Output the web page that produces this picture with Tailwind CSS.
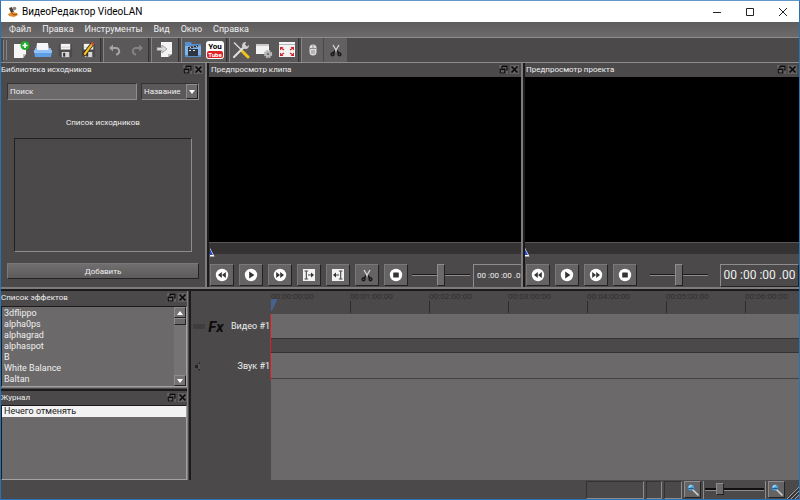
<!doctype html>
<html lang="ru">
  <head>
    <meta charset="UTF-8" />
    <meta name="viewport" content="width=device-width, initial-scale=1" />
    <title>ВидеоРедактор VideoLAN</title>
    <script src="https://cdn.jsdelivr.net/npm/@tailwindcss/browser@4"></script>
  </head>
  <body class="h-screen overflow-hidden flex flex-col bg-[#4b494a] border border-[#2a72b8] border-t-[#6297c8] font-[Roboto,'Noto_Sans',sans-serif] text-[9px] leading-[11px] text-[#efefef]">

    <!-- shared icons -->
    <svg class="hidden">
      <symbol id="float" viewBox="0 0 9 9">
        <path d="M3 1h5v4H7M3 1v2M3 1.5h5" fill="none" stroke="#0c0c0c" stroke-width="1.2" />
        <path d="M1.2 4h4.6v4H1.2zM1 4.5h5" fill="none" stroke="#0c0c0c" stroke-width="1.2" />
      </symbol>
      <symbol id="close" viewBox="0 0 9 9">
        <path d="M1.5 1.5l6 6M7.5 1.5l-6 6" stroke="#0c0c0c" stroke-width="1.7" />
      </symbol>
      <symbol id="rewind" viewBox="0 0 14 14">
        <circle cx="7" cy="7" r="6.2" fill="#fff" />
        <path d="M6.8 4v6L3 7zM10.8 4v6L7 7z" fill="#333" />
      </symbol>
      <symbol id="play" viewBox="0 0 14 14">
        <circle cx="7" cy="7" r="6.2" fill="#fff" />
        <path d="M5.2 3.6v6.8L10.4 7z" fill="#333" />
      </symbol>
      <symbol id="forward" viewBox="0 0 14 14">
        <circle cx="7" cy="7" r="6.2" fill="#fff" />
        <path d="M3.2 4v6L7 7zM7.2 4v6L11 7z" fill="#333" />
      </symbol>
      <symbol id="stop" viewBox="0 0 14 14">
        <circle cx="7" cy="7" r="6.2" fill="#fff" />
        <rect x="4.2" y="4.5" width="5.6" height="5" rx=".6" fill="#333" />
      </symbol>
      <symbol id="mark" viewBox="0 0 14 14">
        <rect x="1" y="1" width="12" height="12" fill="#f2f2f2" />
        <path d="M2.5 3h3.6M2.5 11h3.6M4.3 3v8M6 7h4.500" fill="none" stroke="#444" stroke-width="1.1" />
        <path d="M9 4.600v4.800L12 7z" fill="#333" />
      </symbol>
      <symbol id="scissors" viewBox="0 0 14 14">
        <path d="M4 2l4.200 7M10 2L5.800 9" stroke="#d8d8d8" stroke-width="1.300" />
        <path d="M6 7.500L4 10.500M8 7.500l2 3" stroke="#161616" stroke-width="1.500" />
        <circle cx="3.500" cy="11.300" r="1.500" fill="#4a4a4a" stroke="#161616" stroke-width="1.300" />
        <circle cx="10.500" cy="11.300" r="1.500" fill="#4a4a4a" stroke="#161616" stroke-width="1.300" />
      </symbol>
      <symbol id="zoom" viewBox="0 0 14 14">
        <path d="M6.500 6.500L12 12" stroke="#d4d4d4" stroke-width="1.600" stroke-linecap="round" />
        <circle cx="5" cy="4.500" r="3" fill="#4fa3dc" />
        <path d="M3.200 4.500a2 2 0 0 1 2.500-1.800" fill="none" stroke="#dcefff" stroke-width="1" />
        <path d="M2.500 5.500h5" stroke="#1c5d94" />
      </symbol>
      <symbol id="floppy" viewBox="0 0 18 18">
        <path d="M2 2h13l1 1v13H3l-1-1z" fill="#494949" />
        <rect x="4" y="2" width="10" height="6" fill="#f4f4f4" />
        <path d="M4 5.500h10" stroke="#ccc" />
        <rect x="5" y="10.500" width="8" height="5.500" fill="#d6d6d6" />
        <rect x="6.500" y="11.500" width="2.200" height="4" fill="#333" />
      </symbol>
    </svg>

    <!-- title bar -->
    <header class="h-[21px] shrink-0 bg-white text-black flex items-center pl-[6px]">
      <svg class="size-3 mr-[3px]" viewBox="0 0 12 12">
        <path d="M2 2l3-1 2 5-3 1z" fill="#4b4038" />
        <circle cx="7.500" cy="2.500" r="1.800" fill="#8b8580" />
        <path d="M1 8l4-2 5 1 1 2-4 2-5-1z" fill="#e08a2c" />
        <path d="M4 6l3 3 3-1" fill="none" stroke="#a04d12" />
      </svg>
      <h1 class="text-[10px] leading-[14px] grow">ВидеоРедактор VideoLAN</h1>
      <button aria-label="Свернуть" class="w-[33px] h-full grid place-items-center"><svg class="size-2" viewBox="0 0 8 8"><path d="M0 4.500h8" stroke="#222" /></svg></button>
      <button aria-label="Развернуть" class="w-[33px] h-full grid place-items-center"><svg class="size-2" viewBox="0 0 8 8"><path d="M.5.500h7v7h-7z" fill="none" stroke="#222" /></svg></button>
      <button aria-label="Закрыть" class="w-[33px] h-full grid place-items-center"><svg class="size-2" viewBox="0 0 8 8"><path d="M0 0l8 8M8 0L0 8" stroke="#222" /></svg></button>
    </header>

    <!-- menu -->
    <nav class="h-4 shrink-0 flex items-center gap-[11px] pl-2 bg-linear-to-b from-[#5e5c5d] to-[#6c6a6b] border-b border-[#8e8c8d]">
      <a href="#">Файл</a>
      <a href="#">Правка</a>
      <a href="#">Инструменты</a>
      <a href="#">Вид</a>
      <a href="#">Окно</a>
      <a href="#">Справка</a>
    </nav>

    <!-- toolbar -->
    <div class="h-[25px] shrink-0 flex items-stretch gap-[2px] pl-[2px] border-b border-[#8e8c8d]">
      <div class="flex bg-[#5a5859] border-r border-[#343233]">
        <span class="w-1 my-[2px] mr-[3px] border-x border-[#858384]"></span>
        <button aria-label="Новый" class="w-[22px] grid place-items-center">
          <svg class="size-[18px]" viewBox="0 0 18 18">
            <path d="M2 3h12v10l-3 4H2z" fill="#f6f6f6" /><path d="M14 13l-3 4v-4z" fill="#bbb" />
            <circle cx="13" cy="4.500" r="4.500" fill="#1fae2c" /><path d="M13 2v5M10.500 4.500h5" stroke="#fff" stroke-width="1.600" />
          </svg>
        </button>
        <button aria-label="Открыть" class="w-[22px] grid place-items-center">
          <svg class="size-[18px]" viewBox="0 0 18 18">
            <path d="M3 2h11l1 8H2z" fill="#f4f6f9" /><path d="M1 7h2v3h12V7h2v3H1z" fill="#88b4e6" />
            <path d="M0 9h18l-1 7H1z" fill="#5f9fe8" /><path d="M0 9h18v3H0z" fill="#8fc0f6" />
          </svg>
        </button>
        <button aria-label="Сохранить" class="w-[22px] grid place-items-center"><svg class="size-[17px]"><use href="#floppy" /></svg></button>
        <button aria-label="Сохранить как" class="w-6 grid place-items-center">
          <svg class="size-[17px]" viewBox="0 0 18 18">
            <use href="#floppy" />
            <path d="M4 14L13 2" stroke="#2b1c00" stroke-width="4" /><path d="M4.500 13.500L13 2" stroke="#f1bd2d" stroke-width="2.400" /><path d="M12.500 2.700L14 .8" stroke="#d94a3a" stroke-width="3" />
          </svg>
        </button>
      </div>
      <div class="flex bg-[#5a5859] border-l border-r border-l-[#858384] border-r-[#343233]">
        <button aria-label="Отменить" class="w-[22px] grid place-items-center">
          <svg class="size-3" viewBox="0 0 12 12"><path d="M3 4h4a3 3 0 0 1 0 6.500" fill="none" stroke="#a5a3a4" stroke-width="2" /><path d="M0 4l4-3.500v7z" fill="#a5a3a4" /></svg>
        </button>
        <button aria-label="Повторить" class="w-[22px] grid place-items-center">
          <svg class="size-3" viewBox="0 0 12 12"><path d="M9 4H5a3 3 0 0 0 0 6.500" fill="none" stroke="#848283" stroke-width="2" /><path d="M12 4L8 .5v7z" fill="#848283" /></svg>
        </button>
      </div>
      <div class="flex bg-[#5a5859] border-l border-r border-l-[#858384] border-r-[#343233] px-[2px]">
        <button aria-label="Экспорт" class="w-[22px] grid place-items-center">
          <svg class="size-[18px]" viewBox="0 0 18 18">
            <path d="M5 1h11v12l-4 3H5z" fill="#f4f4f4" /><path d="M16 13l-4 3v-3z" fill="#bbb" />
            <path d="M1 6.500h5V4l5 4-5 4V9.500H1z" fill="#d9d9d9" stroke="#8c8c8c" stroke-width=".7" />
          </svg>
        </button>
      </div>
      <div class="flex bg-[#5a5859] border-l border-r border-l-[#858384] border-r-[#343233]">
        <button aria-label="Создать видео" class="w-[22px] grid place-items-center">
          <svg class="size-[18px]" viewBox="0 0 18 18">
            <path d="M1 1h6l1 2h9v13H1z" fill="#5590cf" /><path d="M1 5h16v9H1z" fill="#7fb5ea" />
            <path d="M4 8h10v7H4z" fill="#2f3640" /><path d="M4 6l10-2v2L4 8z" fill="#2a2f36" />
            <path d="M6 5.800l1 1.500M9 5.200l1 1.500M12 4.600l1 1.300M5 9.500h2M9 9.500h2" stroke="#dfe8f0" />
          </svg>
        </button>
        <button aria-label="YouTube" class="w-[22px] grid place-items-center">
          <span class="size-[18px] rounded-[3px] bg-white flex flex-col items-center justify-center font-bold">
            <span class="text-[8px] leading-[9px] text-black">You</span>
            <span class="text-[6px] leading-[7px] w-4 rounded-[2px] bg-[#e02426] text-white">Tube</span>
          </span>
        </button>
      </div>
      <div class="flex bg-[#5a5859] border-l border-r border-l-[#858384] border-r-[#343233]">
        <button aria-label="Настройки" class="w-[22px] grid place-items-center">
          <svg class="size-[18px]" viewBox="0 0 18 18">
            <path d="M2 1.500l8 8" stroke="#d8d8d8" stroke-width="1.400" /><path d="M10 10l6 6" stroke="#f0c21b" stroke-width="3" stroke-linecap="round" />
            <path d="M2 16L13 5" stroke="#dedede" stroke-width="2.200" stroke-linecap="round" /><path d="M14 1a3.500 3.500 0 1 0 3 3l-2 1.500-2-1.500z" fill="#cfcfcf" />
          </svg>
        </button>
        <button aria-label="Параметры проекта" class="w-6 grid place-items-center">
          <svg class="size-[18px]" viewBox="0 0 18 18">
            <rect x="1" y="3" width="13" height="10" fill="#f2f2f2" /><path d="M1 4h13" stroke="#cacaca" stroke-width="2" />
            <circle cx="13" cy="13" r="3" fill="#999" stroke="#bdbdbd" stroke-width="2.400" stroke-dasharray="1.600 .8" /><circle cx="13" cy="13" r="2.800" fill="#b5b5b5" /><circle cx="13" cy="13" r="1.100" fill="#666" />
          </svg>
        </button>
        <button aria-label="Во весь экран" class="w-[22px] grid place-items-center">
          <svg class="size-[18px]" viewBox="0 0 18 18">
            <rect x="1" y="1" width="16" height="15" fill="#f4f4f4" /><path d="M1 3.500h16" stroke="#b5b5b5" />
            <path d="M2 6h3.500L2 9.500zM16 6h-3.500L16 9.500zM2 15h3.500L2 11.500zM16 15h-3.500L16 11.500z" fill="#d0252b" />
            <path d="M3 7l3 2M15 7l-3 2M3 14l3-2M15 14l-3-2" stroke="#d0252b" stroke-width="1.300" />
          </svg>
        </button>
      </div>
      <div class="flex bg-[#626061] border-l border-[#858384]">
        <button aria-label="Выделение" class="w-[22px] grid place-items-center border-r border-[#4b494a]">
          <svg class="size-[14px]" viewBox="0 0 14 14">
            <rect x="3.500" y="1.500" width="7" height="11" rx="3.500" fill="#dedede" /><path d="M4 5.500h6M7 1.500v4M5 8h4M5 10h4" stroke="#8a8a8a" />
          </svg>
        </button>
        <button aria-label="Разрезать" class="w-[23px] grid place-items-center"><svg class="size-[14px]"><use href="#scissors" /></svg></button>
      </div>
    </div>

    <main class="grow min-h-0 grid grid-rows-[224fr_4px_189fr]">

      <div class="min-h-0 grid grid-cols-[204px_4px_312fr_4px_274fr]">
        <!-- library -->
        <section class="flex flex-col min-h-0">
          <div class="h-[14px] shrink-0 flex items-center gap-[2px] pr-[2px] pb-[2px]">
            <h2 class="grow text-[8px]">Библиотека исходников</h2>
            <button aria-label="Открепить" class="size-[9px] bg-[#626061]"><svg class="size-[9px]"><use href="#float" /></svg></button>
            <button aria-label="Закрыть" class="size-[9px] bg-[#626061]"><svg class="size-[9px]"><use href="#close" /></svg></button>
          </div>
          <div class="grow min-h-0 flex flex-col px-[6px] pt-[6px] pb-[8px]">
            <div class="flex gap-1 shrink-0">
              <input type="text" aria-label="Поиск" placeholder="Поиск" class="w-0 grow h-[17px] px-[2px] text-[8px] bg-[#6b696a] border border-t-[#343233] border-l-[#343233] border-b-[#8e8c8d] border-r-[#8e8c8d] placeholder:text-[#efefef] outline-none" />
              <div class="relative w-[58px]">
                <select aria-label="Сортировка" class="appearance-none w-full h-[17px] pl-[2px] text-[8px] bg-[#5a5859] border border-t-[#343233] border-l-[#343233] border-b-[#8e8c8d] border-r-[#8e8c8d] outline-none">
                  <option>Название</option>
                </select>
                <span class="absolute right-[1px] top-[1px] bottom-[1px] w-3 grid place-items-center pointer-events-none bg-[#6b696a] border border-[#8e8c8d] border-r-[#222] border-b-[#222]">
                  <svg class="w-[6px] h-1" viewBox="0 0 6 4"><path d="M0 0h6L3 4z" fill="#fff" /></svg>
                </span>
              </div>
            </div>
            <h3 class="text-center text-[8px] mt-[17px] mb-[10px]">Список исходников</h3>
            <div class="grow mx-[7px] border border-t-[#222021] border-l-[#222021] border-b-[#8e8c8d] border-r-[#8e8c8d]"></div>
            <button class="h-4 shrink-0 mt-[11px] text-[8px] bg-linear-to-b from-[#706e6f] to-[#5c5a5b] border border-[#7a7879] border-r-[#222] border-b-[#222]">Добавить</button>
          </div>
        </section>

        <div class="border-l-2 border-r-2 border-l-[#7d7b7c] border-r-[#1c1a1b]"></div>

        <!-- clip preview -->
        <section class="flex flex-col min-w-0 min-h-0">
          <div class="h-[14px] shrink-0 flex items-center gap-[2px] pl-[2px] pr-[2px] pb-[2px]">
            <h2 class="grow text-[8px]">Предпросмотр клипа</h2>
            <button aria-label="Открепить" class="size-[9px] bg-[#626061]"><svg class="size-[9px]"><use href="#float" /></svg></button>
            <button aria-label="Закрыть" class="size-[9px] bg-[#626061]"><svg class="size-[9px]"><use href="#close" /></svg></button>
          </div>
          <div class="grow bg-black"></div>
          <div class="relative h-3 shrink-0 bg-[#343233] border-t border-[#5a5859]">
            <svg class="absolute left-[1px] top-[5px] w-[5px] h-[9px]" viewBox="0 0 5 9"><path d="M0 0l4.500 8.500H0z" fill="#fff" /><path d="M0 1l3 6H0z" fill="#2348d8" /></svg>
          </div>
          <div class="shrink-0 h-[33px] flex items-center pl-[1px] pt-[9px] overflow-hidden">
            <div class="flex gap-[5px] shrink-0">
              <button aria-label="Назад" class="w-6 h-[22px] grid place-items-center bg-[#656364] border border-[#7a7879] border-r-[#222] border-b-[#222]"><svg class="size-[14px]"><use href="#rewind" /></svg></button>
              <button aria-label="Воспроизвести" class="w-6 h-[22px] grid place-items-center bg-[#656364] border border-[#7a7879] border-r-[#222] border-b-[#222]"><svg class="size-[14px]"><use href="#play" /></svg></button>
              <button aria-label="Вперёд" class="w-6 h-[22px] grid place-items-center bg-[#656364] border border-[#7a7879] border-r-[#222] border-b-[#222]"><svg class="size-[14px]"><use href="#forward" /></svg></button>
              <button aria-label="Начало фрагмента" class="w-6 h-[22px] grid place-items-center bg-[#656364] border border-[#7a7879] border-r-[#222] border-b-[#222]"><svg class="size-[14px]"><use href="#mark" /></svg></button>
              <button aria-label="Конец фрагмента" class="w-6 h-[22px] grid place-items-center bg-[#656364] border border-[#7a7879] border-r-[#222] border-b-[#222]"><svg class="size-[14px] -scale-x-100"><use href="#mark" /></svg></button>
              <button aria-label="Вырезать" class="w-6 h-[22px] grid place-items-center bg-[#656364] border border-[#7a7879] border-r-[#222] border-b-[#222]"><svg class="size-[14px]"><use href="#scissors" /></svg></button>
              <button aria-label="Стоп" class="w-6 h-[22px] grid place-items-center bg-[#656364] border border-[#7a7879] border-r-[#222] border-b-[#222]"><svg class="size-[14px]"><use href="#stop" /></svg></button>
            </div>
            <div class="grow flex justify-center min-w-[64px]">
              <input type="range" aria-label="Скорость клипа" value="50" class="appearance-none w-[58px] h-[22px] bg-transparent [&::-webkit-slider-runnable-track]:h-[2px] [&::-webkit-slider-runnable-track]:bg-[#1c1a1b] [&::-webkit-slider-runnable-track]:border-b [&::-webkit-slider-runnable-track]:border-[#8e8c8d] [&::-webkit-slider-thumb]:appearance-none [&::-webkit-slider-thumb]:w-2 [&::-webkit-slider-thumb]:h-[22px] [&::-webkit-slider-thumb]:-mt-[10px] [&::-webkit-slider-thumb]:bg-[#6b696a] [&::-webkit-slider-thumb]:border [&::-webkit-slider-thumb]:border-[#8e8c8d] [&::-webkit-slider-thumb]:border-r-[#222] [&::-webkit-slider-thumb]:border-b-[#222]" />
            </div>
            <output class="w-12 h-[23px] shrink-0 pl-[3px] flex items-center border-t border-l border-[#8e8c8d] text-[8px] whitespace-pre">00 :00 :00 .0</output>
          </div>
        </section>

        <div class="border-l-2 border-r-2 border-l-[#7d7b7c] border-r-[#1c1a1b]"></div>

        <!-- project preview -->
        <section class="flex flex-col min-w-0 min-h-0">
          <div class="h-[14px] shrink-0 flex items-center gap-[2px] pl-[1px] pr-[2px] pb-[2px]">
            <h2 class="grow text-[8px]">Предпросмотр проекта</h2>
            <button aria-label="Открепить" class="size-[9px] bg-[#626061]"><svg class="size-[9px]"><use href="#float" /></svg></button>
            <button aria-label="Закрыть" class="size-[9px] bg-[#626061]"><svg class="size-[9px]"><use href="#close" /></svg></button>
          </div>
          <div class="grow bg-black"></div>
          <div class="relative h-3 shrink-0 bg-[#343233] border-t border-[#5a5859]">
            <svg class="absolute left-0 top-[5px] w-[5px] h-[9px]" viewBox="0 0 5 9"><path d="M0 0l4.500 8.500H0z" fill="#fff" /><path d="M0 1l3 6H0z" fill="#2348d8" /></svg>
          </div>
          <div class="shrink-0 h-[33px] flex items-center pl-[1px] pt-[9px] overflow-hidden">
            <div class="flex gap-[5px] shrink-0">
              <button aria-label="Назад" class="w-6 h-[22px] grid place-items-center bg-[#656364] border border-[#7a7879] border-r-[#222] border-b-[#222]"><svg class="size-[14px]"><use href="#rewind" /></svg></button>
              <button aria-label="Воспроизвести" class="w-6 h-[22px] grid place-items-center bg-[#656364] border border-[#7a7879] border-r-[#222] border-b-[#222]"><svg class="size-[14px]"><use href="#play" /></svg></button>
              <button aria-label="Вперёд" class="w-6 h-[22px] grid place-items-center bg-[#656364] border border-[#7a7879] border-r-[#222] border-b-[#222]"><svg class="size-[14px]"><use href="#forward" /></svg></button>
              <button aria-label="Стоп" class="w-6 h-[22px] grid place-items-center bg-[#656364] border border-[#7a7879] border-r-[#222] border-b-[#222]"><svg class="size-[14px]"><use href="#stop" /></svg></button>
            </div>
            <div class="grow flex justify-center min-w-[64px]">
              <input type="range" aria-label="Скорость проекта" value="50" class="appearance-none w-[58px] h-[22px] bg-transparent [&::-webkit-slider-runnable-track]:h-[2px] [&::-webkit-slider-runnable-track]:bg-[#1c1a1b] [&::-webkit-slider-runnable-track]:border-b [&::-webkit-slider-runnable-track]:border-[#8e8c8d] [&::-webkit-slider-thumb]:appearance-none [&::-webkit-slider-thumb]:w-2 [&::-webkit-slider-thumb]:h-[22px] [&::-webkit-slider-thumb]:-mt-[10px] [&::-webkit-slider-thumb]:bg-[#6b696a] [&::-webkit-slider-thumb]:border [&::-webkit-slider-thumb]:border-[#8e8c8d] [&::-webkit-slider-thumb]:border-r-[#222] [&::-webkit-slider-thumb]:border-b-[#222]" />
            </div>
            <output class="w-[79px] h-[23px] shrink-0 flex items-center justify-center border border-[#8e8c8d] border-r-[#222] border-b-[#222] text-[12px] leading-4 whitespace-pre">00 :00 :00 .00</output>
          </div>
        </section>
      </div>

      <div class="border-t-2 border-b-2 border-t-[#7d7b7c] border-b-[#1c1a1b]"></div>

      <div class="min-h-0 grid grid-cols-[186px_4px_1fr]">
        <div class="min-h-0 grid grid-rows-[96fr_4px_89fr]">
          <!-- effects -->
          <section class="min-h-0 flex flex-col">
            <div class="h-[15px] shrink-0 flex items-center gap-[2px] pb-[2px]">
              <h2 class="grow text-[8px]">Список эффектов</h2>
              <button aria-label="Открепить" class="size-[9px] bg-[#626061]"><svg class="size-[9px]"><use href="#float" /></svg></button>
              <button aria-label="Закрыть" class="size-[9px] bg-[#626061]"><svg class="size-[9px]"><use href="#close" /></svg></button>
            </div>
            <div class="grow min-h-0 flex bg-[#6b696a] border border-[#1c1a1b] border-r-[#a3a1a2] border-b-[#a3a1a2]">
              <ul class="grow pl-[2px] pt-[1px] overflow-hidden">
                <li>3dflippo</li>
                <li>alpha0ps</li>
                <li>alphagrad</li>
                <li>alphaspot</li>
                <li>B</li>
                <li>White Balance</li>
                <li>Baltan</li>
              </ul>
              <div class="w-3 shrink-0 flex flex-col bg-[#757374]">
                <button aria-label="Вверх" class="h-[11px] grid place-items-center border border-[#8e8c8d] border-r-[#222] border-b-[#222]"><svg class="w-[6px] h-1" viewBox="0 0 6 4"><path d="M0 4h6L3 0z" fill="#fff" /></svg></button>
                <span class="h-[7px] border border-[#8e8c8d] border-r-[#222] border-b-[#222] bg-[#6b696a]"></span>
                <span class="grow"></span>
                <button aria-label="Вниз" class="h-[11px] grid place-items-center border border-[#8e8c8d] border-r-[#222] border-b-[#222]"><svg class="w-[6px] h-1" viewBox="0 0 6 4"><path d="M0 0h6L3 4z" fill="#fff" /></svg></button>
              </div>
            </div>
          </section>

          <div class="border-t border-b-2 border-t-[#7d7b7c] border-b-[#1c1a1b]"></div>

          <!-- history -->
          <section class="min-h-0 flex flex-col">
            <div class="h-[14px] shrink-0 flex items-center gap-[2px] pb-[2px]">
              <h2 class="grow text-[8px]">Журнал</h2>
              <button aria-label="Открепить" class="size-[9px] bg-[#626061]"><svg class="size-[9px]"><use href="#float" /></svg></button>
              <button aria-label="Закрыть" class="size-[9px] bg-[#626061]"><svg class="size-[9px]"><use href="#close" /></svg></button>
            </div>
            <ul class="grow bg-[#6b696a] border border-[#1c1a1b] border-r-[#a3a1a2] border-b-[#a3a1a2]">
              <li class="bg-[#f2f2f2] text-[#222] pl-[2px]">Нечего отменять</li>
            </ul>
          </section>
        </div>

        <div class="border-l border-r-2 border-l-[#7d7b7c] border-r-[#1c1a1b]"></div>

        <!-- timeline -->
        <section class="min-w-0 grid grid-cols-[80px_1fr]">
          <div class="pt-[23px] flex flex-col">
            <div class="h-[25px] flex items-center">
              <span class="w-3 h-[5px] mx-[2px] bg-[#3f3d3e]"></span>
              <button class="w-[18px] text-[15px] leading-4 font-bold italic text-[#0c0c0c]">Fx</button>
              <span class="grow text-right text-[9px] pr-[1px]">Видео #1</span>
            </div>
            <div class="h-[14px]"></div>
            <div class="h-[26px] flex items-center">
              <button aria-label="Без звука" class="ml-1"><svg class="w-[7px] h-[9px]" viewBox="0 0 7 9"><path d="M0 3h2l3-3v9L2 6H0z" fill="#242223" /><path d="M4 2v5" stroke="#868485" /></svg></button>
              <span class="grow text-right text-[9px] pr-[1px]">Звук #1</span>
            </div>
          </div>

          <div class="min-w-0 flex flex-col relative">
            <div class="h-[23px] shrink-0 flex overflow-hidden text-[8px] leading-[10px] text-[#2e2c2d] font-['Open_Sans',sans-serif]">
              <div class="w-[79px] shrink-0"><p>00:00:00:00</p></div>
              <div class="w-[79px] shrink-0"><p>00:01:00:00</p><p class="h-3 border-l border-[#2e2c2d]"></p></div>
              <div class="w-[79px] shrink-0"><p>00:02:00:00</p><p class="h-3 border-l border-[#2e2c2d]"></p></div>
              <div class="w-[79px] shrink-0"><p>00:03:00:00</p><p class="h-3 border-l border-[#2e2c2d]"></p></div>
              <div class="w-[79px] shrink-0"><p>00:04:00:00</p><p class="h-3 border-l border-[#2e2c2d]"></p></div>
              <div class="w-[79px] shrink-0"><p>00:05:00:00</p><p class="h-3 border-l border-[#2e2c2d]"></p></div>
              <div class="w-[79px] shrink-0"><p>00:06:00:00</p><p class="h-3 border-l border-[#2e2c2d]"></p></div>
            </div>
            <div class="h-[25px] shrink-0 bg-[#6b696a] border-b border-[#343233]"></div>
            <div class="h-[14px] shrink-0 border-b border-[#343233]"></div>
            <div class="h-[26px] shrink-0 bg-[#6b696a] border-b border-[#434142]"></div>
            <div class="grow bg-[#6b696a]"></div>
            <!-- playhead -->
            <svg class="absolute left-0 top-2 w-[7px] h-3" viewBox="0 0 7 12"><path d="M0 0h6.500L1 12H0z" fill="#46618f" /></svg>
            <span class="absolute -left-px top-[23px] w-px h-[66px] z-10 bg-[#d8202c]"></span>
          </div>
        </section>
      </div>
    </main>

    <!-- status bar -->
    <footer class="h-[19px] shrink-0 flex justify-end items-center gap-[2px]">
      <span class="w-[58px] h-[18px] border border-[#343233] border-r-[#8e8c8d] border-b-[#8e8c8d]"></span>
      <span class="w-4 h-[18px] border border-[#343233] border-r-[#8e8c8d] border-b-[#8e8c8d]"></span>
      <span class="w-[18px] h-[18px] border border-[#343233] border-r-[#8e8c8d] border-b-[#8e8c8d]"></span>
      <button aria-label="Уменьшить" class="w-[17px] h-[17px] grid place-items-center bg-[#656364] border border-[#8e8c8d] border-r-[#222] border-b-[#222]"><svg class="size-[14px]"><use href="#zoom" /></svg></button>
      <div class="w-[63px] h-[18px] flex items-center border-x border-[#8e8c8d] px-[1px]">
        <input type="range" aria-label="Масштаб" value="22" class="appearance-none w-full h-[14px] bg-transparent [&::-webkit-slider-runnable-track]:h-[3px] [&::-webkit-slider-runnable-track]:bg-[#111] [&::-webkit-slider-runnable-track]:border-b [&::-webkit-slider-runnable-track]:border-[#8e8c8d] [&::-webkit-slider-thumb]:appearance-none [&::-webkit-slider-thumb]:w-2 [&::-webkit-slider-thumb]:h-3 [&::-webkit-slider-thumb]:-mt-[5px] [&::-webkit-slider-thumb]:bg-[#6b696a] [&::-webkit-slider-thumb]:border [&::-webkit-slider-thumb]:border-[#8e8c8d] [&::-webkit-slider-thumb]:border-r-[#222] [&::-webkit-slider-thumb]:border-b-[#222]" />
      </div>
      <button aria-label="Увеличить" class="w-[17px] h-[17px] grid place-items-center bg-[#656364] border border-[#8e8c8d] border-r-[#222] border-b-[#222]"><svg class="size-[14px]"><use href="#zoom" /></svg></button>
      <svg class="w-3 h-3 self-end" viewBox="0 0 12 12"><path d="M0 12L12 0M4 12l8-8M8 12l4-4" stroke="#a3a1a2" /><path d="M1.500 12L12 1.500M5.500 12L12 5.500" stroke="#222" /></svg>
    </footer>

  </body>
</html>
